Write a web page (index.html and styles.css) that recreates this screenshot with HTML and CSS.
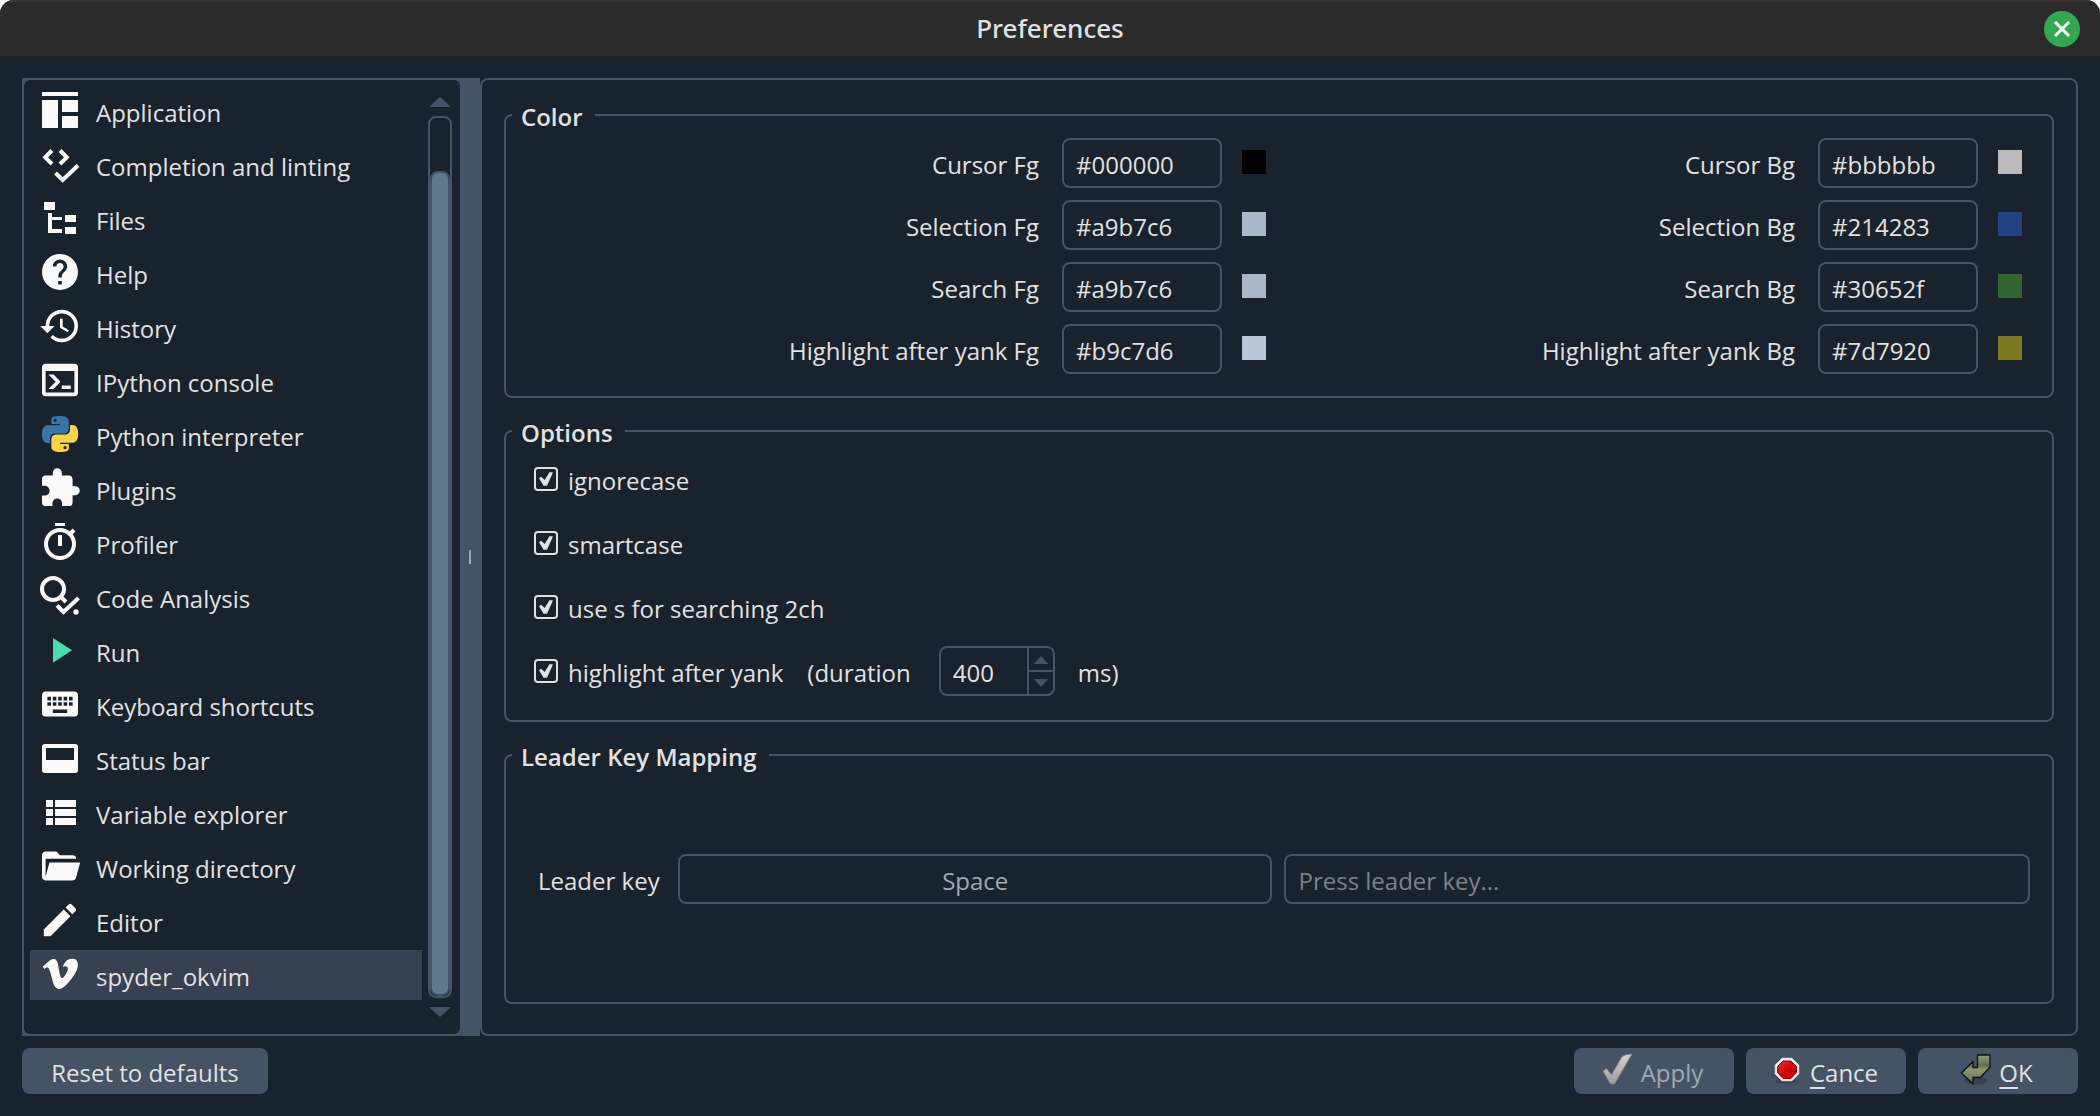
FILE: index.html
```html
<!DOCTYPE html>
<html lang="en">
<head>
  <meta charset="utf-8">
  <title>Preferences</title>
  <link rel="stylesheet" href="styles.css">
</head>
<body>
  <div class="dialog">
    <header class="titlebar">
      <h1>Preferences</h1>
      <button class="close" type="button" aria-label="Close">
        <svg viewBox="0 0 36 36"><path d="M11 11 L25 25 M25 11 L11 25" stroke="#fff" stroke-width="3"/></svg>
      </button>
    </header>

    <main class="content">
      <div class="sidebar">
        <nav class="pages">
          <ul>
            <li><a href="#application">
              <svg viewBox="0 0 48 48"><path d="M6 6h36v4H6zM6 14h16v28H6zM26 14h16v12H26zM26 30h16v12H26z"/></svg>
              <span>Application</span></a></li>
            <li><a href="#completion">
              <svg viewBox="0 0 48 48"><path class="line" d="M16 10.5L9.2 17.3L16 24M24 10.5L30.8 17.3L24 24M19.5 33L26.7 40L42 25.5"/></svg>
              <span>Completion and linting</span></a></li>
            <li><a href="#files">
              <svg viewBox="0 0 48 48"><path d="M8 8h11v8H8zM12 19h4v4h10v3H16v9h10v4H12zM29 21h11v7H29zM29 33h11v7H29z"/></svg>
              <span>Files</span></a></li>
            <li><a href="#help">
              <svg viewBox="-1.33 -1.33 26.67 26.67"><path d="M15.07,11.25L14.17,12.17C13.45,12.89 13,13.5 13,15H11V14.5C11,13.39 11.45,12.39 12.17,11.67L13.41,10.41C13.78,10.05 14,9.55 14,9C14,7.89 13.1,7 12,7A2,2 0 0,0 10,9H8A4,4 0 0,1 12,5A4,4 0 0,1 16,9C16,9.88 15.64,10.67 15.07,11.25M13,19H11V17H13M12,2A10,10 0 0,0 2,12A10,10 0 0,0 12,22A10,10 0 0,0 22,12C22,6.47 17.5,2 12,2Z"/></svg>
              <span>Help</span></a></li>
            <li><a href="#history">
              <svg viewBox="-1.33 -1.33 26.67 26.67"><path d="M13.5,8H12V13L16.28,15.54L17,14.33L13.5,12.25V8M13,3A9,9 0 0,0 4,12H1L4.96,16.03L9,12H6A7,7 0 0,1 13,5A7,7 0 0,1 20,12A7,7 0 0,1 13,19C11.07,19 9.32,18.21 8.06,16.94L6.64,18.36C8.27,20 10.5,21 13,21A9,9 0 0,0 22,12A9,9 0 0,0 13,3"/></svg>
              <span>History</span></a></li>
            <li><a href="#ipython">
              <svg viewBox="-1.33 -1.33 26.67 26.67"><path d="M20,19V7H4V19H20M20,3A2,2 0 0,1 22,5V19A2,2 0 0,1 20,21H4A2,2 0 0,1 2,19V5C2,3.89 2.9,3 4,3H20M13,17V15H18V17H13M9.58,13L5.57,9H8.4L11.7,12.3C12.09,12.69 12.09,13.33 11.7,13.72L8.42,17H5.59L9.58,13Z"/></svg>
              <span>IPython console</span></a></li>
            <li><a href="#interpreter">
              <svg viewBox="-4 -4 32 32">
                <path fill="#3776ab" d="M14.25.18l.9.2.73.26.59.3.45.32.34.34.25.34.16.33.1.3.04.26.02.2-.01.13V8.5l-.05.63-.13.55-.21.46-.26.38-.3.31-.33.25-.35.19-.35.14-.33.1-.3.07-.26.04-.21.02H8.77l-.69.05-.59.14-.5.22-.41.27-.33.32-.27.35-.2.36-.15.37-.1.35-.07.32-.04.27-.02.21v3.06H3.17l-.21-.03-.28-.07-.32-.12-.35-.18-.36-.26-.36-.36-.35-.46-.32-.59-.28-.73-.21-.88-.14-1.05-.05-1.23.06-1.22.16-1.04.24-.87.32-.71.36-.57.4-.44.42-.33.42-.24.4-.16.36-.1.32-.05.24-.01h.16l.06.01h8.16v-.83H6.18l-.01-2.75-.02-.37.05-.34.11-.31.17-.28.25-.26.31-.23.38-.2.44-.18.51-.15.58-.12.64-.1.71-.06.77-.04.84-.02 1.27.05zm-6.3 1.98l-.23.33-.08.41.08.41.23.34.33.22.41.09.41-.09.33-.22.23-.34.08-.41-.08-.41-.23-.33-.33-.22-.41-.09-.41.09z"/>
                <path fill="#ffd343" d="M21.1 6.11l.28.06.32.12.35.18.36.27.36.35.35.47.32.59.28.73.21.88.14 1.04.05 1.23-.06 1.23-.16 1.04-.24.86-.32.71-.36.57-.4.45-.42.33-.42.24-.4.16-.36.09-.32.05-.24.02-.16-.01h-8.22v.82h5.84l.01 2.76.02.36-.05.34-.11.31-.17.29-.25.25-.31.24-.38.2-.44.17-.51.15-.58.13-.64.09-.71.07-.77.04-.84.01-1.27-.04-1.07-.14-.9-.2-.73-.25-.59-.3-.45-.33-.34-.34-.25-.34-.16-.33-.1-.3-.04-.25-.02-.2.01-.13v-5.34l.05-.64.13-.54.21-.46.26-.38.3-.32.33-.24.35-.2.35-.14.33-.1.3-.06.26-.04.21-.02.13-.01h5.84l.69-.05.59-.14.5-.21.41-.28.33-.32.27-.35.2-.36.15-.36.1-.35.07-.32.04-.28.02-.21V6.07h2.09l.14.01zm-6.47 14.25l-.23.33-.08.41.08.41.23.33.33.23.41.08.41-.08.33-.23.23-.33.08-.41-.08-.41-.23-.33-.33-.23-.41-.08-.41.08z"/>
              </svg>
              <span>Python interpreter</span></a></li>
            <li><a href="#plugins">
              <svg viewBox="-1.33 -1.33 26.67 26.67"><path d="M20.5,11H19V7C19,5.89 18.1,5 17,5H13V3.5A2.5,2.5 0 0,0 10.5,1A2.5,2.5 0 0,0 8,3.5V5H4A2,2 0 0,0 2,7V10.8H3.5C5,10.8 6.2,12 6.2,13.5C6.2,15 5,16.2 3.5,16.2H2V20A2,2 0 0,0 4,22H7.8V20.5C7.8,19 9,17.8 10.5,17.8C12,17.8 13.2,19 13.2,20.5V22H17A2,2 0 0,0 19,20V16H20.5A2.5,2.5 0 0,0 23,13.5A2.5,2.5 0 0,0 20.5,11Z"/></svg>
              <span>Plugins</span></a></li>
            <li><a href="#profiler">
              <svg viewBox="0 0 48 48"><circle class="line" cx="24" cy="26" r="14"/><path d="M19 5h10v3H19zM22 17h4v11h-4z"/><path class="line" d="M34 16L38 12"/></svg>
              <span>Profiler</span></a></li>
            <li><a href="#analysis">
              <svg viewBox="0 0 48 48"><circle class="line" cx="17" cy="17" r="11"/><path class="line" d="M25 25L30 30M21 33.5L27.5 40L42.5 26"/><circle cx="40" cy="40" r="2.7"/></svg>
              <span>Code Analysis</span></a></li>
            <li><a href="#run">
              <svg viewBox="0 0 48 48"><path fill="#44deb0" d="M17 12L36 24.3L17 36.7z"/></svg>
              <span>Run</span></a></li>
            <li><a href="#shortcuts">
              <svg viewBox="-1.33 -1.33 26.67 26.67"><path d="M19,10H17V8H19M19,13H17V11H19M16,10H14V8H16M16,13H14V11H16M16,17H8V15H16M7,10H5V8H7M7,13H5V11H7M8,11H10V13H8M8,8H10V10H8M11,11H13V13H11M11,8H13V10H11M20,5H4C2.89,5 2,5.89 2,7V17A2,2 0 0,0 4,19H20A2,2 0 0,0 22,17V7C22,5.89 21.1,5 20,5Z"/></svg>
              <span>Keyboard shortcuts</span></a></li>
            <li><a href="#statusbar">
              <svg viewBox="0 0 48 48"><path fill-rule="evenodd" d="M9 10h30a3 3 0 0 1 3 3v23a3 3 0 0 1-3 3H9a3 3 0 0 1-3-3V13a3 3 0 0 1 3-3zM10 14v12h28V14z"/></svg>
              <span>Status bar</span></a></li>
            <li><a href="#variables">
              <svg viewBox="0 0 48 48"><path d="M10 12h7v7h-7zM19 12h21v7H19zM10 21h7v7h-7zM19 21h21v7H19zM10 30h7v7h-7zM19 30h21v7H19z"/></svg>
              <span>Variable explorer</span></a></li>
            <li><a href="#workdir">
              <svg viewBox="-1.33 -1.33 26.67 26.67"><path d="M19,20H4C2.89,20 2,19.1 2,18V6C2,4.89 2.89,4 4,4H10L12,6H19A2,2 0 0,1 21,8H21L4,8V18L6.14,10H23.21L20.93,18.5C20.7,19.37 19.92,20 19,20Z"/></svg>
              <span>Working directory</span></a></li>
            <li><a href="#editor">
              <svg viewBox="-1.33 -1.33 26.67 26.67"><path d="M20.71,7.04C21.1,6.65 21.1,6 20.71,5.63L18.37,3.29C18,2.9 17.35,2.9 16.96,3.29L15.12,5.12L18.87,8.87M3,17.25V21H6.75L17.81,9.93L14.06,6.18L3,17.25Z"/></svg>
              <span>Editor</span></a></li>
            <li><a class="selected" href="#okvim">
              <svg viewBox="0 0 48 48"><path transform="translate(6.7 3.6) scale(.0785)" d="M447.8 153.6c-2 43.6-32.4 103.3-91.4 179.1-60.9 79.2-112.4 118.8-154.6 118.8-26.1 0-48.2-24.1-66.3-72.3C100.3 250 85.3 174.3 56.2 174.3c-3.4 0-15.1 7.1-35.2 21.1L0 168.2c51.6-45.3 100.9-95.7 131.8-98.5 34.9-3.4 56.3 20.5 64.4 71.5 28.7 181.5 41.4 208.9 93.6 126.7 18.7-29.6 28.8-52.1 30.2-67.6 4.8-45.9-35.8-42.8-63.3-31 22-72.1 64.1-107.1 126.2-105.1 45.8 1.2 67.5 31.1 64.9 89.5z"/></svg>
              <span>spyder_okvim</span></a></li>
          </ul>
          <div class="scrollbar">
            <button type="button" aria-label="Scroll up"><svg viewBox="0 0 24 24"><path d="M1 15L12 5L23 15z"/></svg></button>
            <div class="track"><div class="thumb"></div></div>
            <button type="button" aria-label="Scroll down"><svg viewBox="0 0 24 24"><path d="M1 9L12 19L23 9z"/></svg></button>
          </div>
        </nav>
        <div class="handle"><i></i></div>
      </div>

      <form class="panel" id="okvim">
        <fieldset>
          <legend>Color</legend>
          <div class="colors">
            <label for="cursor-fg">Cursor Fg</label>
            <input type="text" id="cursor-fg" value="#000000"><span class="swatch" style="background: #000000"></span>
            <label for="cursor-bg">Cursor Bg</label>
            <input type="text" id="cursor-bg" value="#bbbbbb"><span class="swatch" style="background: #bbbbbb"></span>

            <label for="select-fg">Selection Fg</label>
            <input type="text" id="select-fg" value="#a9b7c6"><span class="swatch" style="background: #a9b7c6"></span>
            <label for="select-bg">Selection Bg</label>
            <input type="text" id="select-bg" value="#214283"><span class="swatch" style="background: #214283"></span>

            <label for="search-fg">Search Fg</label>
            <input type="text" id="search-fg" value="#a9b7c6"><span class="swatch" style="background: #a9b7c6"></span>
            <label for="search-bg">Search Bg</label>
            <input type="text" id="search-bg" value="#30652f"><span class="swatch" style="background: #30652f"></span>

            <label for="yank-fg">Highlight after yank Fg</label>
            <input type="text" id="yank-fg" value="#b9c7d6"><span class="swatch" style="background: #b9c7d6"></span>
            <label for="yank-bg">Highlight after yank Bg</label>
            <input type="text" id="yank-bg" value="#7d7920"><span class="swatch" style="background: #7d7920"></span>
          </div>
        </fieldset>

        <fieldset>
          <legend>Options</legend>
          <div class="options">
            <div class="option">
              <input type="checkbox" id="ignorecase" checked>
              <label for="ignorecase">ignorecase</label>
            </div>
            <div class="option">
              <input type="checkbox" id="smartcase" checked>
              <label for="smartcase">smartcase</label>
            </div>
            <div class="option">
              <input type="checkbox" id="search2ch" checked>
              <label for="search2ch">use s for searching 2ch</label>
            </div>
            <div class="option">
              <input type="checkbox" id="yank" checked>
              <label for="yank">highlight after yank</label>
              <label class="duration" for="duration">(duration</label>
              <div class="spin">
                <input type="text" inputmode="numeric" id="duration" value="400">
                <div class="steps">
                  <button type="button" aria-label="Increase"><svg viewBox="0 0 24 22"><path d="M5 16L12 8L19 16z"/></svg></button>
                  <button type="button" aria-label="Decrease"><svg viewBox="0 0 24 22"><path d="M5 7L12 15L19 7z"/></svg></button>
                </div>
              </div>
              <span class="unit">ms)</span>
            </div>
          </div>
        </fieldset>

        <fieldset class="leader">
          <legend>Leader Key Mapping</legend>
          <div class="leader-row">
            <label for="leader">Leader key</label>
            <input class="current" type="text" value="Space" aria-label="Current leader key" readonly>
            <input class="press" type="text" id="leader" placeholder="Press leader key...">
          </div>
        </fieldset>
      </form>
    </main>

    <footer class="buttons">
      <button class="reset" type="button">Reset to defaults</button>
      <button class="action" type="button" disabled>
        <svg viewBox="0 0 32 32">
          <defs><linearGradient id="tick" x1="0" y1="0" x2="0" y2="1"><stop offset="0" stop-color="#d4d4d2"/><stop offset="1" stop-color="#9c9c9a"/></linearGradient></defs>
          <path d="M2 18L5.5 15.5L10.5 22L21 3.5Q25 1 31 1L13.5 31H9.5Z" fill="url(#tick)" stroke="#84847f" stroke-width="1"/>
        </svg>
        <span>Apply</span>
      </button>
      <button class="action" type="button">
        <svg viewBox="0 0 32 32">
          <defs><linearGradient id="stop" x1="0" y1="0" x2="1" y2="1"><stop offset="0" stop-color="#f03030"/><stop offset=".6" stop-color="#cc0000"/></linearGradient></defs>
          <ellipse cx="17" cy="28" rx="11" ry="3" fill="#3a4454"/>
          <path d="M12 5h10l7 7v9l-7 7H12l-7-7v-9z" fill="#f6f6f4" stroke="#c8b8b4" stroke-width=".6"/>
          <path d="M13 8h8l5.5 5.5v6L21 25.500h-8L7.500 19.5v-6z" fill="url(#stop)" stroke="#a40000" stroke-width="1"/>
        </svg>
        <span><u>C</u>ance</span>
      </button>
      <button class="action" type="button">
        <svg viewBox="0 0 32 32">
          <defs><linearGradient id="enter" x1="0" y1="0" x2="0" y2="1"><stop offset="0" stop-color="#93a376"/><stop offset=".35" stop-color="#5d6f4c"/><stop offset=".5" stop-color="#8a9a70"/><stop offset="1" stop-color="#5a6e49"/></linearGradient></defs>
          <ellipse cx="17" cy="28" rx="12" ry="3.5" fill="#384253"/>
          <path d="M18.5 2H31V14L21.5 24.5H14V31L2.5 20L14 8.5V14.5H18.5Z" fill="url(#enter)" stroke="#10140c" stroke-width="1.3" stroke-linejoin="round"/>
        </svg>
        <span><u>O</u>K</span>
      </button>
    </footer>
  </div>
</body>
</html>
```
FILE: styles.css
```css
* {
  box-sizing: border-box;
}
body {
  margin: 0;
  background: #fff;
  color: #e0e1e3;
  font-family: "Open Sans", "Noto Sans", sans-serif;
  font-size: 24px;
  line-height: 32px;
}
button, input {
  font: inherit;
  color: inherit;
  margin: 0;
}
button {
  border: none;
  padding: 0;
  background: none;
}
svg {
  display: block;
  flex: none;
}
.dialog {
  display: flex;
  flex-direction: column;
  min-height: 100vh;
  background: #19232d;
  border-radius: 14px 14px 0 0;
  overflow: hidden;
}

/* title bar */
.titlebar {
  display: grid;
  grid-template-columns: 1fr auto 1fr;
  align-items: center;
  height: 56px;
  padding: 0 20px;
  background: #2b2b2b;
  border-top: 2px solid #373737;
}
.titlebar h1 {
  grid-column: 2;
  margin: 0;
  padding-bottom: 2px;
  font-family: "Noto Sans", sans-serif;
  font-size: 26px;
  font-weight: 500;
}
.close {
  justify-self: end;
  width: 36px;
  height: 36px;
  border-radius: 50%;
  background: #33a852;
}

.content {
  display: flex;
  flex: 1;
  padding: 22px 22px 12px;
}

/* page list */
.sidebar {
  display: flex;
  flex: 0 0 458px;
  padding: 2px 0 2px 2px;
  background: #455364;
}
.pages {
  display: flex;
  flex: 1;
  padding: 0 8px 0 6px;
  background: #19232d;
  border-radius: 6px;
}
.pages ul {
  flex: 1;
  display: flex;
  flex-direction: column;
  gap: 4px;
  list-style: none;
  margin: 0 6px 0 0;
  padding: 6px 0;
}
.pages a {
  display: flex;
  gap: 12px;
  height: 50px;
  padding-left: 6px;
  color: inherit;
  text-decoration: none;
}
.pages a.selected {
  background: #37414f;
}
.pages a svg {
  width: 48px;
  height: 48px;
  fill: #fafafa;
}
.pages a .line {
  fill: none;
  stroke: #fafafa;
  stroke-width: 4;
}
.pages a span {
  padding-top: 11px;
}
.scrollbar {
  display: flex;
  flex-direction: column;
  width: 24px;
  padding: 12px 0;
}
.scrollbar svg {
  width: 24px;
  height: 24px;
  fill: #455364;
}
.track {
  flex: 1;
  display: flex;
  align-items: flex-end;
  border: 2px solid #455364;
  border-radius: 8px;
}
.thumb {
  width: 100%;
  height: 94%;
  background: #60798b;
  border: 2px solid #455364;
  border-radius: 8px;
}
.handle {
  display: flex;
  align-items: center;
  justify-content: center;
  width: 20px;
}
.handle i {
  width: 2px;
  height: 14px;
  background: #9da9b5;
}

/* settings */
.panel {
  flex: 1;
  display: flex;
  flex-direction: column;
  gap: 15px;
  padding: 17px 22px 30px;
  border: 2px solid #455364;
  border-radius: 8px;
}
fieldset {
  min-width: 0;
  margin: 0;
  padding: 0 6px;
  border: 2px solid #455364;
  border-radius: 8px;
}
legend {
  padding: 4px 12px 0 9px;
  font-weight: 600;
}
.panel input[type="text"] {
  min-width: 0;
  height: 50px;
  padding: 3px 12px 0;
  background: #19232d;
  border: 2px solid #455364;
  border-radius: 8px;
}
.colors {
  display: grid;
  grid-template-columns: 1fr 160px 24px 1fr 160px 24px;
  gap: 12px 20px;
  align-items: center;
  padding: 5px 24px 22px 18px;
}
.colors label {
  padding: 4px 3px 0 0;
  text-align: right;
}
.swatch {
  height: 24px;
  margin-bottom: 2px;
}
.options {
  display: flex;
  flex-direction: column;
  gap: 14px;
  padding: 5px 22px 24px;
}
.option {
  display: flex;
  align-items: center;
  height: 50px;
}
.option label, .option .unit {
  padding-top: 4px;
}
.option input[type="checkbox"] {
  appearance: none;
  width: 24px;
  height: 24px;
  margin-right: 10px;
  border: 2px solid #e0e1e3;
  border-radius: 4px;
}
.option input[type="checkbox"]:checked::before {
  content: "";
  display: block;
  width: 14px;
  height: 14px;
  margin: 3px;
  background: #e0e1e3;
  clip-path: polygon(0 45%, 16% 34%, 40% 58%, 76% 0, 100% 4%, 58% 96%, 34% 100%);
}
.option .duration {
  margin: 0 28px 0 24px;
}
.option .unit {
  margin-left: 23px;
}
.spin {
  display: flex;
  width: 116px;
  height: 50px;
  border: 2px solid #455364;
  border-radius: 8px;
}
.panel .spin input {
  flex: 1;
  height: 46px;
  padding: 2px 0 0 12px;
  border: none;
}
.steps {
  display: flex;
  flex-direction: column;
  width: 26px;
  border-left: 2px solid #455364;
}
.steps button {
  flex: 1;
}
.steps button + button {
  border-top: 2px solid #455364;
}
.steps svg {
  width: 24px;
  height: 22px;
  fill: #455364;
}
.leader {
  flex: 1;
}
.leader-row {
  display: flex;
  align-items: center;
  height: 100%;
  min-height: 228px;
  padding: 0 16px 18px 26px;
}
.leader-row label {
  width: 140px;
  padding-top: 4px;
}
.leader-row .current {
  flex: 15 1 0;
  margin-right: 12px;
  text-align: center;
  color: #9da9b5;
}
.leader-row .press {
  flex: 19 1 0;
}
.press::placeholder {
  color: #7d8288;
  opacity: 1;
}

/* bottom buttons */
.buttons {
  display: flex;
  gap: 12px;
  padding: 0 22px 22px;
}
.buttons button {
  height: 46px;
  border-radius: 8px;
  background: #455364;
}
.reset {
  min-width: 246px;
  padding-top: 3px;
  margin-right: auto;
}
.action {
  display: flex;
  align-items: center;
  justify-content: center;
  gap: 8px;
  width: 160px;
}
.buttons .action {
  padding-right: 4px;
}
.action:disabled {
  color: #9da9b5;
}
.action svg {
  width: 32px;
  height: 32px;
  margin-bottom: 4px;
}
.action span {
  padding-top: 3px;
}
.action u {
  text-decoration-thickness: 2px;
  text-underline-offset: 5px;
}
```
